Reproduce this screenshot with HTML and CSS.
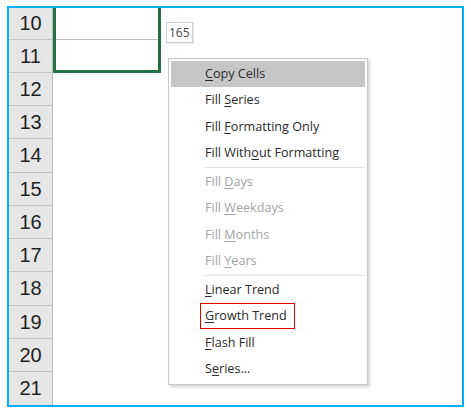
FILE: index.html
```html
<!DOCTYPE html>
<html>
<head>
<meta charset="utf-8">
<link rel="stylesheet" href="styles.css">
</head>
<body>
<div class="frame">
  <div class="sheet">
    <div class="headers">
      <div class="rh first">10</div>
      <div class="rh">11</div>
      <div class="rh">12</div>
      <div class="rh">13</div>
      <div class="rh tall">14</div>
      <div class="rh">15</div>
      <div class="rh">16</div>
      <div class="rh">17</div>
      <div class="rh tall">18</div>
      <div class="rh">19</div>
      <div class="rh">20</div>
      <div class="rh">21</div>
    </div>
    <div class="grid">
      <div class="selection">
        <div class="cell c10"></div>
        <div class="cell c11"></div>
      </div>
      <div class="tip">165</div>
      <div class="menu">
        <div class="item active"><u>C</u>opy Cells</div>
        <div class="item">Fill <u>S</u>eries</div>
        <div class="item">Fill <u>F</u>ormatting Only</div>
        <div class="item">Fill With<u>o</u>ut Formatting</div>
        <div class="sep"></div>
        <div class="item off">Fill <u>D</u>ays</div>
        <div class="item off">Fill <u>W</u>eekdays</div>
        <div class="item off">Fill <u>M</u>onths</div>
        <div class="item off">Fill <u>Y</u>ears</div>
        <div class="sep"></div>
        <div class="item"><u>L</u>inear Trend</div>
        <div class="item"><span class="mark"><u>G</u>rowth Trend</span></div>
        <div class="item"><u>F</u>lash Fill</div>
        <div class="item">S<u>e</u>ries...</div>
      </div>
    </div>
  </div>
</div>
</body>
</html>
```

FILE: styles.css
```css
* { box-sizing: border-box; }
html, body { margin: 0; padding: 0; background: #fff; }
body { width: 471px; height: 414px; overflow: hidden; }

.frame {
  margin: 6px 0 0 7px;
  width: 457px;
  height: 401px;
  border: 2px solid #00b0f0;
}
.sheet {
  display: flex;
  height: 100%;
}
.headers {
  width: 44px;
  flex: none;
  background: #e6e6e6;
  border-right: 1px solid #bcbcbc;
  display: flex;
  flex-direction: column;
}
.rh {
  height: 33px;
  border-bottom: 1px solid #c4c4c4;
  font-family: "Liberation Sans", Arial, sans-serif;
  font-size: 20px;
  color: #1f1f1f;
  display: flex;
  align-items: center;
  justify-content: center;
}
.rh.first { height: 32px; }
.rh.tall { height: 34px; }
.rh:last-child { border-bottom: none; }

.grid {
  position: relative;
  flex: 1;
}
.selection {
  width: 108px;
  border: 3px solid #217346;
  border-top: none;
  display: flex;
  flex-direction: column;
}
.c10 { height: 32px; border-bottom: 1px solid #bdbdbd; }
.c11 { height: 30px; }

.tip {
  position: absolute;
  left: 113px;
  top: 14px;
  height: 21px;
  padding: 0 2px;
  border: 1px solid #c9c9c9;
  box-shadow: 1px 1px 1px rgba(0,0,0,0.08);
  background: #fff;
  font-family: "Open Sans", "Noto Sans", sans-serif;
  font-size: 12px;
  line-height: 19px;
  color: #444;
}

.menu {
  position: absolute;
  left: 115px;
  top: 50px;
  width: 200px;
  background: #fff;
  border: 1px solid #c8c8c8;
  padding: 2px;
  box-shadow: 2px 2px 3px rgba(0,0,0,0.18);
  font-family: "Open Sans", "Noto Sans", sans-serif;
  font-size: 12.6px;
  color: #2a2a2a;
}
.item {
  height: 26.25px;
  line-height: 25px;
  padding-left: 34px;
  white-space: nowrap;
}
.item.active { background: #c6c6c6; }
.item.off { color: #a3a3a3; }
.item u { text-decoration-thickness: 1px; text-underline-offset: 2px; }
.sep {
  height: 1px;
  margin: 1px 0 1px 34px;
  background: #e1e1e1;
}
.mark {
  display: inline-block;
  margin-left: -5px;
  padding: 0 7px 0 4px;
  border: 1px solid #e00000;
  line-height: 24px;
  vertical-align: top;
}
```
